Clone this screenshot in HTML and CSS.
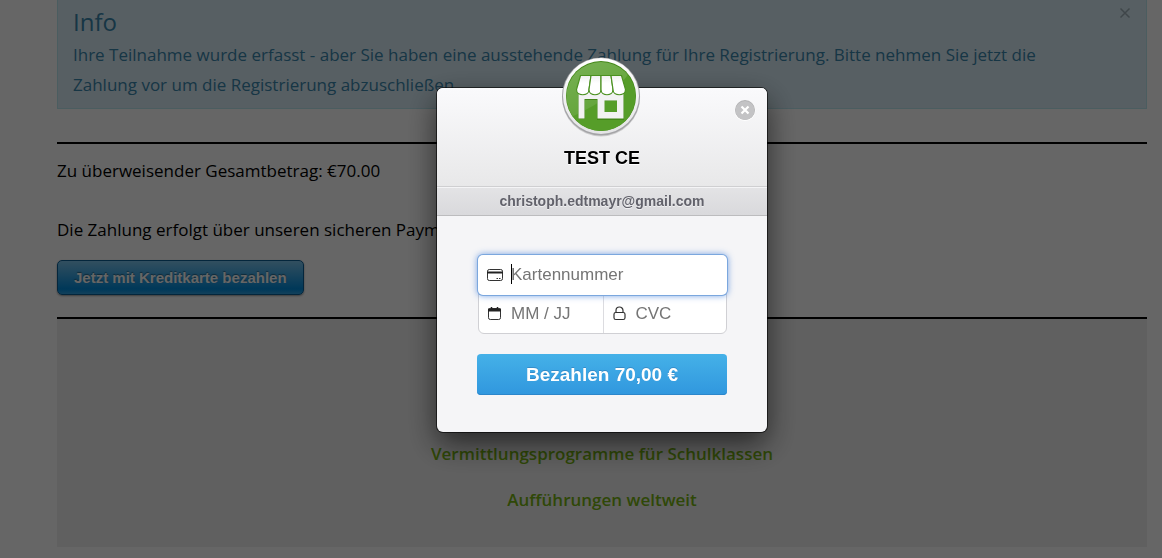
FILE: index.html
```html
<!DOCTYPE html>
<html lang="de">
<head>
    <meta charset="UTF-8">
    <meta name="viewport" content="width=device-width, initial-scale=1.0">
    <title>Zahlung</title>
    <link rel="stylesheet" href="styles.css">
</head>
<body>
    <main class="page">
        <div class="alert">
            <div class="alert-text">
                <h4>Info</h4>
                <p>Ihre Teilnahme wurde erfasst - aber Sie haben eine ausstehende Zahlung für Ihre Registrierung. Bitte nehmen Sie jetzt die Zahlung vor um die Registrierung abzuschließen.</p>
            </div>
            <button type="button" class="alert-close" aria-label="Schließen">
                <svg width="12" height="12" viewBox="0 0 12 12"><path d="M1.5 1.5l9 9M10.5 1.5l-9 9" stroke="#9fb0b8" stroke-width="1.5"/></svg>
            </button>
        </div>

        <section class="payment">
            <p>Zu überweisender Gesamtbetrag: €70.00</p>
            <p>Die Zahlung erfolgt über unseren sicheren Payment</p>
            <button type="button" class="pay-button">Jetzt mit Kreditkarte bezahlen</button>
        </section>

        <footer class="links">
            <a href="#">Vermittlungsprogramme für Schulklassen</a>
            <a href="#">Aufführungen weltweit</a>
        </footer>
    </main>

    <div class="overlay">
        <div class="checkout" role="dialog" aria-labelledby="shopName">
            <header class="checkout-header">
                <svg class="logo" width="80" height="80" viewBox="0 0 80 80">
                    <defs>
                        <linearGradient id="ring" x1="0" y1="0" x2="0" y2="1">
                            <stop offset="0" stop-color="#fff"/>
                            <stop offset="1" stop-color="#e4e4e6"/>
                        </linearGradient>
                        <linearGradient id="shine" x1="0" y1="0" x2="0.6" y2="1">
                            <stop offset="0" stop-color="#fff" stop-opacity="0.22"/>
                            <stop offset="1" stop-color="#fff" stop-opacity="0.06"/>
                        </linearGradient>
                        <linearGradient id="cloth" x1="0" y1="0" x2="0" y2="1">
                            <stop offset="0" stop-color="#f0f0f0"/>
                            <stop offset="0.4" stop-color="#fff"/>
                        </linearGradient>
                        <clipPath id="disc"><circle cx="40" cy="39.5" r="34.5"/></clipPath>
                    </defs>
                    <circle cx="40" cy="40.5" r="39" fill="#000" opacity="0.15"/>
                    <circle cx="40" cy="39.5" r="39" fill="#a4a4a7"/>
                    <circle cx="40" cy="39" r="38" fill="url(#ring)"/>
                    <circle cx="40" cy="39" r="35" fill="#438718"/>
                    <circle cx="40" cy="39.5" r="34.5" fill="#569d29"/>
                    <path d="M0 0h76C66 26 46 44 10 60H0z" fill="url(#shine)" clip-path="url(#disc)"/>
                    <!-- shop walls -->
                    <path d="M17 36h46v27H36V43H24v19h-7zM43 44v12h13V44z" fill="#438718" fill-rule="evenodd"/>
                    <path d="M17.5 35h45v26.500H36.500V42H23.500v19.500h-6zM43.500 43.500v11.500h12.500V43.500z" fill="#f2f2f2" fill-rule="evenodd"/>
                    <!-- awning -->
                    <g fill="url(#cloth)" stroke="#4b9120" stroke-width="1.2">
                        <path d="M19.500 18.500h10.500L28 32.500c0 7-12.500 7-12.500 0z"/>
                        <path d="M30 18.500h10V32.500c0 7-12 7-12 0z"/>
                        <path d="M40 18.500h10L52 32.500c0 7-12 7-12 0z"/>
                        <path d="M50 18.500h10.500L64.500 32.500c0 7-12.500 7-12.500 0z"/>
                    </g>
                </svg>
                <h1 id="shopName">TEST CE</h1>
                <button type="button" class="checkout-close" aria-label="Fenster schließen">
                    <svg width="22" height="22" viewBox="0 0 22 22">
                        <circle cx="11" cy="11.5" r="10.5" fill="#fff"/>
                        <circle cx="11" cy="11" r="10" fill="#b2b2b4"/>
                        <circle cx="11" cy="11.5" r="9.5" fill="#c3c3c5"/>
                        <path d="M7.5 7.5l7 7M14.5 7.5l-7 7" stroke="#fff" stroke-width="2.2"/>
                    </svg>
                </button>
            </header>
            <p class="email">christoph.edtmayr@gmail.com</p>
            <form class="card-form">
                <div class="fields">
                    <label class="field field-number">
                        <svg width="16" height="16" viewBox="0 0 16 16" fill="none" stroke="#333">
                            <rect x="0.5" y="2.5" width="15" height="11" rx="1.8"/>
                            <path d="M0 5.5h16" stroke="#222" stroke-width="2"/>
                            <path d="M9.5 11.5h1.5M12 11.5h1.5"/>
                        </svg>
                        <span class="caret"></span>
                        <input type="text" placeholder="Kartennummer" aria-label="Kartennummer">
                    </label>
                    <label class="field">
                        <svg width="16" height="16" viewBox="0 0 16 16" fill="none" stroke="#333">
                            <rect x="1.5" y="2.5" width="12" height="11" rx="1.8"/>
                            <path d="M1 4h13" stroke="#222" stroke-width="3"/>
                            <path d="M4.500 1v2M10.500 1v2" stroke="#222" stroke-width="1.5"/>
                        </svg>
                        <input type="text" placeholder="MM / JJ" aria-label="Gültig bis">
                    </label>
                    <label class="field">
                        <svg width="16" height="16" viewBox="0 0 16 16" fill="none" stroke="#333" stroke-width="1.2">
                            <rect x="2" y="6.5" width="11" height="7" rx="1.8"/>
                            <path d="M4 6.5V4.500a3.500 3.500 0 0 1 7 0v2"/>
                        </svg>
                        <input type="text" placeholder="CVC" aria-label="CVC">
                    </label>
                </div>
                <button type="submit" class="submit">Bezahlen 70,00 €</button>
            </form>
        </div>
    </div>
</body>
</html>
```
FILE: styles.css
```css
* {
    box-sizing: border-box;
}

body {
    margin: 0;
    background-color: #fff;
    font-family: "Open Sans", sans-serif;
    font-size: 17px;
    line-height: 30px;
    color: #000;
    overflow: hidden;
}

h1, h4, p {
    margin: 0;
}

button {
    border: none;
    cursor: pointer;
}

.page {
    padding: 0 15px 12px 57px;
}

.alert {
    display: flex;
    align-items: flex-start;
    justify-content: space-between;
    padding: 7px 15px 8px;
    background-color: #d9edf7;
    border: 1px solid #bce8f1;
    border-top: none;
    color: #3a87ad;
}

.alert-text {
    flex: 1;
    padding-right: 50px;
}

.alert h4 {
    font-size: 24px;
    font-weight: 400;
    line-height: 30px;
    padding-bottom: 3px;
}

.alert-close {
    display: flex;
    padding: 0;
    background: none;
}

.payment {
    margin-top: 33px;
    padding: 12px 0 22px;
    border-top: 2px solid #000;
    border-bottom: 2px solid #000;
}

.payment p {
    margin-bottom: 29px;
}

.payment p + p {
    margin-bottom: 15px;
}

.pay-button {
    display: block;
    padding: 0 16px;
    border: 1px solid #0a5f97;
    border-radius: 5px;
    background: linear-gradient(#7dc5ee, #008cdd 85%, #30a2e4);
    box-shadow: 0 1px 2px rgba(0, 0, 0, 0.4);
    color: #fff;
    font: bold 15px/33px "Liberation Sans", Arial, sans-serif;
    text-shadow: 0 -1px 1px rgba(0, 0, 0, 0.4);
}

.links {
    display: flex;
    flex-direction: column;
    align-items: center;
    gap: 16px;
    padding: 120px 0 32px;
    background-color: #f0f0f0;
}

.links a {
    color: #77b312;
    font-weight: 600;
    text-decoration: none;
}

.overlay {
    position: fixed;
    inset: 0;
    display: flex;
    justify-content: center;
    align-items: flex-start;
    padding: 88px 15px 0 57px;
    background-color: rgba(0, 0, 0, 0.6);
    font-family: "Liberation Sans", Arial, sans-serif;
}

.checkout {
    width: 330px;
    border-radius: 6px;
    background-color: #f5f5f7;
    box-shadow: 0 0 0 1px rgba(0, 0, 0, 0.6), 0 12px 30px rgba(0, 0, 0, 0.6);
}

.checkout-header {
    position: relative;
    padding: 58px 0 16px;
    border-radius: 6px 6px 0 0;
    border-bottom: 1px solid #cfcfd1;
    background: linear-gradient(#fafafc, #e8e8e9);
    text-align: center;
}

.checkout-header h1 {
    font-size: 18px;
    line-height: 24px;
    text-shadow: 0 1px 0 #fff;
}

.logo {
    position: absolute;
    top: -31px;
    left: 50%;
    margin-left: -41px;
}

.checkout-close {
    position: absolute;
    top: 11px;
    right: 11px;
    display: flex;
    padding: 0;
    background: none;
}

.email {
    border-top: 1px solid #f4f4f6;
    border-bottom: 1px solid #bcbcbe;
    background: linear-gradient(#e3e3e5, #d9d9dc);
    color: #62626b;
    font-size: 14px;
    font-weight: bold;
    line-height: 27px;
    text-align: center;
    text-shadow: 0 1px 0 #f0f0f2;
}

.card-form {
    padding: 39px 40px 37px;
}

.fields {
    display: grid;
    grid-template-columns: 1fr 1fr;
    border: 1px solid #d0d0d4;
    border-radius: 6px;
    background-color: #fff;
    margin: 0 0 20px 1px;
}

.field {
    display: flex;
    align-items: center;
    gap: 8px;
    height: 39px;
    padding: 0 8px;
}

.field-number {
    position: relative;
    grid-column: 1 / 3;
    margin: -1px;
    height: 40px;
    padding-left: 9px;
    border-radius: 5px;
    background-color: #fff;
    box-shadow: 0 0 0 1px #7ba7de, 0 0 6px 1px rgba(70, 130, 220, 0.7);
}

.field:last-child {
    border-left: 1px solid #dcdce0;
}

.field svg {
    flex: none;
}

.field input {
    width: 100%;
    min-width: 0;
    padding: 0;
    border: none;
    outline: none;
    background: none;
    font: 17px/20px "Liberation Sans", Arial, sans-serif;
    caret-color: transparent;
}

.field input::placeholder {
    color: #757575;
}

.caret {
    position: absolute;
    top: 9px;
    left: 33px;
    width: 1px;
    height: 20px;
    background-color: #000;
}

.submit {
    display: block;
    width: 100%;
    padding: 0;
    border-radius: 4px;
    background: linear-gradient(#45b1e8, #3097de);
    box-shadow: inset 0 -1px 0 #2b86cb;
    color: #fff;
    font: bold 19px/41px "Liberation Sans", Arial, sans-serif;
    text-shadow: 0 -1px 0 rgba(40, 100, 160, 0.4);
}
```
